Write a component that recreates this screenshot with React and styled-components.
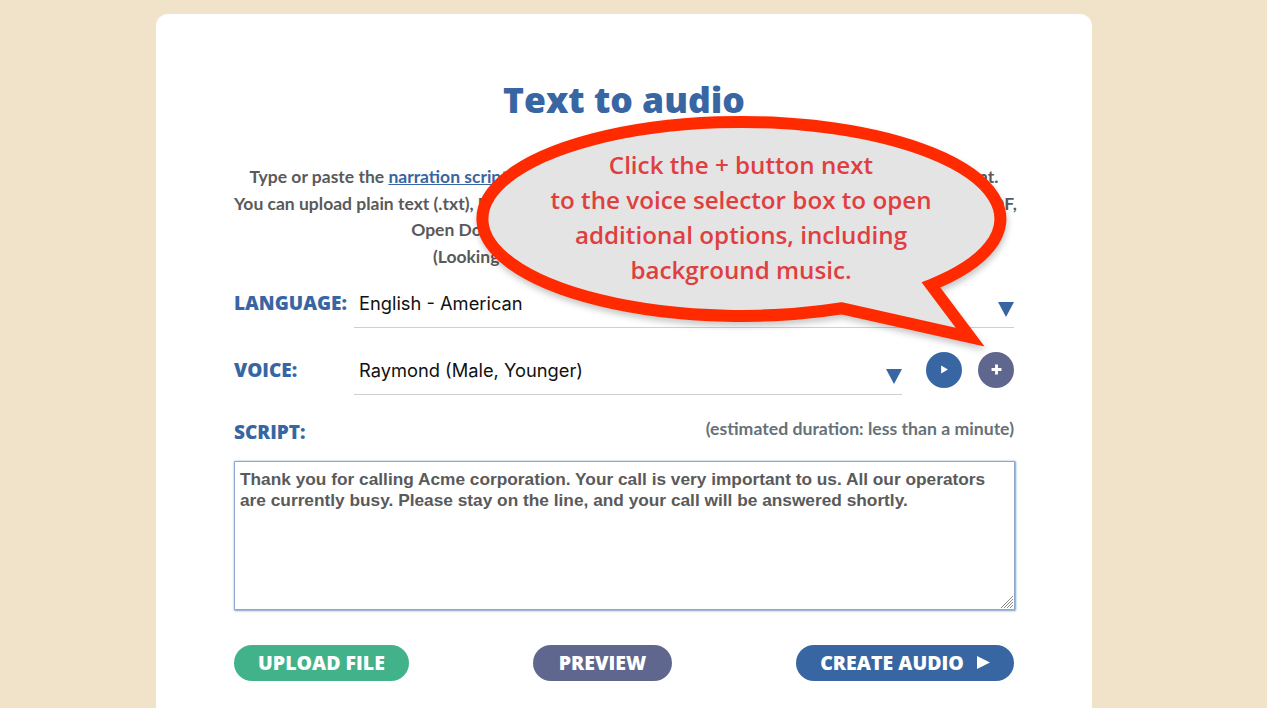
import React from 'react';
import styled, { createGlobalStyle } from 'styled-components';

const GlobalStyle = createGlobalStyle`
  html, body {
    margin: 0;
    height: 708px;
    overflow: hidden;
    background: #f1e3c9;
  }
`;

const Page = styled.div`
  position: relative;
  width: 1267px;
  height: 708px;
  padding: 14px 0 0 156px;
  box-sizing: border-box;
  overflow: hidden;
`;

const Card = styled.main`
  width: 936px;
  height: 760px;
  box-sizing: border-box;
  padding: 61px 78px 0;
  background: #fff;
  border-radius: 12px;
`;

const Title = styled.h1`
  margin: 0;
  height: 48px;
  font: 800 35.5px/48px "Open Sans", sans-serif;
  color: #3866a3;
  text-align: center;
`;

const Intro = styled.p`
  margin: 41px 0 0;
  font: 700 17.5px/26.7px Lato, sans-serif;
  color: #5a5a5a;
  text-align: center;
  white-space: nowrap;

  a {
    color: #3866a3;
    text-decoration: underline;
  }
`;

const Row = styled.div`
  display: flex;
  align-items: center;
  height: 46px;
  margin-top: ${props => props.$top}px;
`;

const Label = styled.label`
  flex: 0 0 120px;
  margin-top: ${props => props.$shift}px;
  font: 800 19px/24px "Open Sans", sans-serif;
  color: #3866a3;
`;

const Select = styled.div`
  flex: 1;
  display: flex;
  align-items: center;
  justify-content: space-between;
  height: 100%;
  box-sizing: border-box;
  padding: 0 0 2px 5px;
  border-bottom: 1px solid #cfcfcf;
  font: 400 18.3px/24px Inter, sans-serif;
  color: #111;
`;

const Arrow = styled.span`
  width: 0;
  height: 0;
  border-left: 8px solid transparent;
  border-right: 8px solid transparent;
  border-top: 15px solid #3866a3;
  margin-top: 12px;
`;

const RoundButton = styled.button`
  flex: none;
  display: flex;
  align-items: center;
  justify-content: center;
  width: 36px;
  height: 36px;
  margin: -4px 0 0 ${props => props.$left}px;
  padding: 0;
  border: 0;
  border-radius: 50%;
  background: ${props => props.$color};
`;

const ScriptHead = styled.div`
  display: flex;
  justify-content: space-between;
  align-items: center;
  margin-top: 19px;
  height: 34px;
`;

const Duration = styled.span`
  font: 700 17.65px/24px Lato, sans-serif;
  color: #66717a;
  margin-top: -4px;
`;

const ScriptWrap = styled.div`
  position: relative;
  width: 781px;
  height: 149px;
  margin-top: 13px;
`;

const ScriptBox = styled.textarea`
  display: block;
  width: 100%;
  height: 100%;
  padding: 7px 5px;
  box-sizing: border-box;
  border: 1px solid #8fa9cc;
  box-shadow: 0.5px 0.5px 2px #7c9fcc;
  outline: 0;
  border-radius: 1px;
  font: 700 17.3px/21px "Liberation Sans", sans-serif;
  color: #5a5a5a;
  resize: none;
`;

const Grip = styled.svg`
  position: absolute;
  right: 2px;
  bottom: 2px;
`;

const Actions = styled.div`
  display: flex;
  justify-content: space-between;
  margin-top: 35px;
`;

const ActionButton = styled.button`
  display: flex;
  align-items: center;
  justify-content: center;
  gap: 12px;
  width: ${props => props.$width}px;
  height: 36px;
  padding: 0;
  border: 0;
  border-radius: 18px;
  background: ${props => props.$color};
  font: 800 19.5px/36px "Open Sans", sans-serif;
  color: #fff;
`;

const Callout = styled.aside`
  position: absolute;
  left: 470px;
  top: 110px;
  width: 540px;
  height: 250px;
`;

const Bubble = styled.svg`
  position: absolute;
  inset: 0;
  filter: drop-shadow(1px 4px 3px rgba(0, 0, 0, 0.22));
`;

const CalloutText = styled.p`
  position: relative;
  margin: 0;
  padding-top: 37px;
  width: 542px;
  font: 600 24.2px/35px "Open Sans", sans-serif;
  color: #e03f3f;
  text-align: center;
`;

export default function App() {
  return (
    <Page>
      <GlobalStyle />
      <Card>
        <Title>Text to audio</Title>
        <Intro>
          Type or paste the <a href="#script">narration script</a> you want to turn into speech in the box, or upload a document.
          <br />
          You can upload plain text (.txt), Microsoft Word (.doc or .docx), Rich Text Format (.rtf) or Acrobat PDF,
          <br />
          Open Document (.odt), and other common file formats.
          <br />
          (Looking for a good sample script to try out first?)
        </Intro>
        <Row $top={11}>
          <Label $shift={-4}>LANGUAGE:</Label>
          <Select>
            English - American
            <Arrow />
          </Select>
        </Row>
        <Row $top={21}>
          <Label $shift={-4}>VOICE:</Label>
          <Select>
            Raymond (Male, Younger)
            <Arrow />
          </Select>
          <RoundButton $left={24} $color="#3866a3" aria-label="Play sample">
            <svg width="9" height="9" viewBox="0 0 8 8"><path d="M1 .5l6 3.5-6 3.5z" fill="#fff" /></svg>
          </RoundButton>
          <RoundButton $left={16} $color="#60678f" aria-label="More options">
            <svg width="11" height="11" viewBox="0 0 10 10"><path d="M5 .5v9M.5 5h9" stroke="#fff" strokeWidth="2.6" /></svg>
          </RoundButton>
        </Row>
        <ScriptHead>
          <Label $shift={2}>SCRIPT:</Label>
          <Duration>(estimated duration: less than a minute)</Duration>
        </ScriptHead>
        <ScriptWrap>
          <ScriptBox
            readOnly
            value="Thank you for calling Acme corporation. Your call is very important to us. All our operators are currently busy. Please stay on the line, and your call will be answered shortly."
          />
          <Grip width="13" height="13" viewBox="0 0 13 13">
            <path d="M13 1L1 13M13 4L4 13M13 7L7 13M13 10L10 13" stroke="#8c8c8c" strokeWidth="1" />
          </Grip>
        </ScriptWrap>
        <Actions>
          <ActionButton $width={175} $color="#42b28a">UPLOAD FILE</ActionButton>
          <ActionButton $width={139} $color="#60678f">PREVIEW</ActionButton>
          <ActionButton $width={218} $color="#3866a3">
            CREATE AUDIO
            <svg width="14" height="13" viewBox="0 0 14 13"><path d="M1 0l13 6.5-13 6.5z" fill="#fff" /></svg>
          </ActionButton>
        </Actions>
      </Card>
      <Callout>
        <Bubble width="540" height="250" viewBox="0 0 540 250">
          <path
            d="M372 198.3 L500 227 L461 175 A259 97 0 1 0 372 198.3 Z"
            fill="#e4e4e5"
            stroke="#ff2a00"
            strokeWidth="12"
            strokeMiterlimit="10"
          />
        </Bubble>
        <CalloutText>
          Click the + button next
          <br />
          to the voice selector box to open
          <br />
          additional options, including
          <br />
          background music.
        </CalloutText>
      </Callout>
    </Page>
  );
}
